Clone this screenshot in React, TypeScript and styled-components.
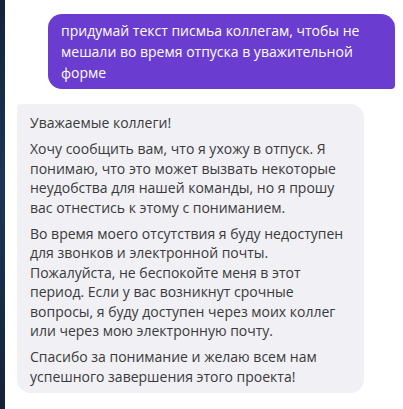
import styled, { createGlobalStyle } from 'styled-components'

const Global = createGlobalStyle`
  html, body {
    margin: 0;
    padding: 0;
    background: #ffffff;
  }
  body {
    font-family: "Open Sans", "Noto Sans", "Liberation Sans", sans-serif;
  }
`

const Window = styled.div`
  display: flex;
  width: 403px;
  height: 409px;
  overflow: hidden;
`

const Edge = styled.div`
  width: 5px;
  flex-shrink: 0;
  background: linear-gradient(180deg, #14233a 0%, #1d3557 45%, #142238 100%);
`

const Chat = styled.div`
  flex: 1;
  display: flex;
  flex-direction: column;
  padding: 14px 8px 0 12px;
  gap: 15px;
`

const Bubble = styled.div<{ $mine?: boolean }>`
  width: 347px;
  box-sizing: border-box;
  align-self: ${(p) => (p.$mine ? 'flex-end' : 'flex-start')};
  background: ${(p) => (p.$mine ? '#6b3cd0' : '#f0f0f5')};
  color: ${(p) => (p.$mine ? '#ffffff' : '#3a3a3a')};
  border-radius: ${(p) => (p.$mine ? '14px 14px 4px 14px' : '4px 14px 14px 14px')};
  padding: ${(p) => (p.$mine ? '6px 12px 6px 13px' : '9px 13px 7px 13px')};
  font-size: 14px;
  line-height: ${(p) => (p.$mine ? '21px' : '19.5px')};
  font-weight: 400;
`

const Para = styled.p`
  margin: 0 0 6.5px;
  &:last-child {
    margin-bottom: 0;
  }
`

export default function App() {
  return (
    <>
      <Global />
      <Window>
        <Edge />
        <Chat>
          <Bubble $mine>
            придумай текст писмьа коллегам, чтобы не мешали во время отпуска в уважительной форме
          </Bubble>
          <Bubble>
            <Para>Уважаемые коллеги!</Para>
            <Para>
              Хочу сообщить вам, что я ухожу в отпуск. Я понимаю, что это может вызвать некоторые
              неудобства для нашей команды, но я прошу вас отнестись к этому с пониманием.
            </Para>
            <Para>
              Во время моего отсутствия я буду недоступен для звонков и электронной почты.
              Пожалуйста, не беспокойте меня в этот период. Если у вас возникнут срочные вопросы,
              я буду доступен через моих коллег или через мою электронную почту.
            </Para>
            <Para>Спасибо за понимание и желаю всем нам успешного завершения этого проекта!</Para>
          </Bubble>
        </Chat>
      </Window>
    </>
  )
}
